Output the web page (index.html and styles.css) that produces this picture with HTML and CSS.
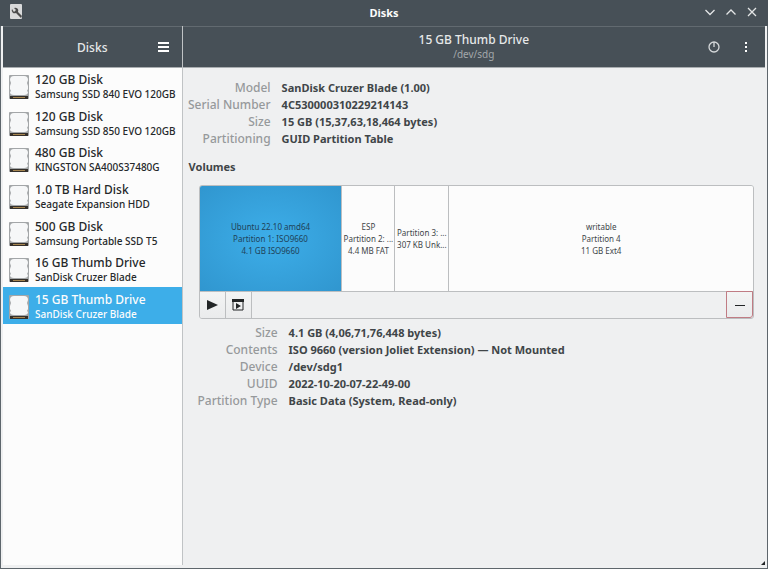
FILE: index.html
```html
<!DOCTYPE html>
<html lang="en">
<head>
  <meta charset="UTF-8">
  <meta name="viewport" content="width=device-width, initial-scale=1.0">
  <title>Disks</title>
  <link rel="stylesheet" href="styles.css">
</head>
<body>
  <svg class="symbols" width="0" height="0" aria-hidden="true">
    <defs>
      <symbol id="drive" viewBox="0 0 20 24">
        <rect x="0" y="0" width="20" height="24" rx="1" fill="#a3a6a8"/>
        <path d="M5 1h10q4 0 4 4l-1 3 1 3v3l-1 2 1 1q0 3-4 3H5q-4 0-4-3l1-1-1-2v-3l1-3-1-3q0-4 4-4z" fill="#f6f7f8"/>
        <rect x="1" y="21" width="18" height="3" fill="#35302b"/>
        <path d="M4 22.500h12" stroke="#a58550" stroke-width="1"/>
      </symbol>
    </defs>
  </svg>

  <div class="window">
    <div class="titlebar">
      <svg class="app-icon" width="14" height="16" viewBox="0 0 14 16">
        <rect x="0" y="0" width="12" height="15" rx="1" fill="#d9dadb"/>
        <path d="M2 5a3 3 0 0 0 4 4l5 5 1-2-4-4a3 3 0 0 0-4-4l2 2-2 2z" fill="#4c4c4c"/>
      </svg>
      <h1>Disks</h1>
      <div class="window-buttons">
        <button type="button" aria-label="Minimize">
          <svg width="12" height="12" viewBox="0 0 12 12"><path d="M1.500 4 6 8.500 10.500 4"/></svg>
        </button>
        <button type="button" aria-label="Maximize">
          <svg width="12" height="12" viewBox="0 0 12 12"><path d="M1.500 8.500 6 4l4.500 4.500"/></svg>
        </button>
        <button type="button" aria-label="Close">
          <svg width="12" height="12" viewBox="0 0 12 12"><path d="m2 2 8 8M10 2l-8 8"/></svg>
        </button>
      </div>
    </div>

    <div class="content">
      <aside class="sidebar">
        <header class="header side-header">
          <h2>Disks</h2>
          <button type="button" class="icon-button" aria-label="Menu">
            <svg width="12" height="12" viewBox="0 0 12 12"><path d="M1 2h11M1 6h11M1 10h11" stroke="#fff" stroke-width="2"/></svg>
          </button>
        </header>
        <ul class="drive-list">
          <li><a href="#" class="drive"><svg width="20" height="24"><use href="#drive"/></svg><span><b>120 GB Disk</b><small>Samsung SSD 840 EVO 120GB</small></span></a></li>
          <li><a href="#" class="drive"><svg width="20" height="24"><use href="#drive"/></svg><span><b>120 GB Disk</b><small>Samsung SSD 850 EVO 120GB</small></span></a></li>
          <li><a href="#" class="drive"><svg width="20" height="24"><use href="#drive"/></svg><span><b>480 GB Disk</b><small>KINGSTON SA400S37480G</small></span></a></li>
          <li><a href="#" class="drive"><svg width="20" height="24"><use href="#drive"/></svg><span><b>1.0 TB Hard Disk</b><small>Seagate Expansion HDD</small></span></a></li>
          <li><a href="#" class="drive"><svg width="20" height="24"><use href="#drive"/></svg><span><b>500 GB Disk</b><small>Samsung Portable SSD T5</small></span></a></li>
          <li><a href="#" class="drive"><svg width="20" height="24"><use href="#drive"/></svg><span><b>16 GB Thumb Drive</b><small>SanDisk Cruzer Blade</small></span></a></li>
          <li><a href="#" class="drive selected" aria-current="true"><svg width="20" height="24"><use href="#drive"/></svg><span><b>15 GB Thumb Drive</b><small>SanDisk Cruzer Blade</small></span></a></li>
        </ul>
      </aside>

      <main class="main">
        <header class="header main-header">
          <div class="heading">
            <h2>15 GB Thumb Drive</h2>
            <p>/dev/sdg</p>
          </div>
          <div class="header-actions">
            <button type="button" class="icon-button" aria-label="Power off">
              <svg width="12" height="12" viewBox="0 0 12 12"><circle cx="6" cy="6" r="5" fill="none" stroke="#d5d8da" stroke-width="1.300"/><path d="M6 1v5" stroke="#d5d8da" stroke-width="1.300"/></svg>
            </button>
            <button type="button" class="icon-button" aria-label="Drive options">
              <svg width="12" height="12" viewBox="0 0 12 12"><path d="M5 1h2v2H5zM5 5h2v2H5zM5 9h2v2H5z" fill="#fff"/></svg>
            </button>
          </div>
        </header>

        <div class="details">
          <dl class="info drive-info">
            <dt>Model</dt><dd>SanDisk Cruzer Blade (1.00)</dd>
            <dt>Serial Number</dt><dd>4C530000310229214143</dd>
            <dt>Size</dt><dd>15 GB (15,37,63,18,464 bytes)</dd>
            <dt>Partitioning</dt><dd>GUID Partition Table</dd>
          </dl>

          <h3>Volumes</h3>

          <section class="volumes">
            <div class="partitions">
              <button type="button" class="partition active">
                <span>Ubuntu 22.10 amd64</span>
                <span>Partition 1: ISO9660</span>
                <span>4.1 GB ISO9660</span>
              </button>
              <button type="button" class="partition">
                <span>ESP</span>
                <span>Partition 2: ...</span>
                <span>4.4 MB FAT</span>
              </button>
              <button type="button" class="partition">
                <span>Partition 3: ...</span>
                <span>307 KB Unk...</span>
              </button>
              <button type="button" class="partition">
                <span>writable</span>
                <span>Partition 4</span>
                <span>11 GB Ext4</span>
              </button>
            </div>
            <div class="toolbar">
              <button type="button" class="tool" aria-label="Mount">
                <svg width="12" height="12" viewBox="0 0 12 12"><path d="M1 1l11 5-11 5z" fill="#222526"/></svg>
              </button>
              <button type="button" class="tool" aria-label="Partition options">
                <svg width="12" height="12" viewBox="0 0 12 12"><path d="M1 1h10v10H1z" fill="none" stroke="#222526"/><path d="M0 0h12v3H0zM4 4l5 3-5 3z" fill="#222526"/></svg>
              </button>
              <button type="button" class="tool remove" aria-label="Delete partition">
                <svg width="12" height="12" viewBox="0 0 12 12"><path d="M1 6.500h10" stroke="#222526"/></svg>
              </button>
            </div>
          </section>

          <dl class="info volume-info">
            <dt>Size</dt><dd>4.1 GB (4,06,71,76,448 bytes)</dd>
            <dt>Contents</dt><dd>ISO 9660 (version Joliet Extension) — Not Mounted</dd>
            <dt>Device</dt><dd>/dev/sdg1</dd>
            <dt>UUID</dt><dd>2022-10-20-07-22-49-00</dd>
            <dt>Partition Type</dt><dd>Basic Data (System, Read-only)</dd>
          </dl>
        </div>
        <svg class="grip" width="4" height="4" viewBox="0 0 4 4"><path d="M4 0v4H0z" fill="#222526"/></svg>
      </main>
    </div>
  </div>
</body>
</html>
```
FILE: styles.css
```css
* {
  box-sizing: border-box;
}

body {
  margin: 0;
  font-family: "Noto Sans", sans-serif;
  font-size: 11px;
  font-weight: 700;
  line-height: 17px;
  color: #404548;
}

h1, h2, h3, p, ul, dl, dd {
  margin: 0;
  padding: 0;
}

h1, h2, h3 {
  font-size: 11px;
  font-weight: 700;
}

button {
  font: inherit;
  color: inherit;
  padding: 0;
  border: 0;
  background: none;
}

svg {
  display: block;
  flex: none;
}

.symbols {
  position: absolute;
}

.window {
  display: flex;
  flex-direction: column;
  min-height: 100vh;
  background: #eff0f1;
  border: 1px solid #5e666c;
  border-top: 0;
}

/* title bar */
.titlebar {
  display: grid;
  grid-template-columns: 1fr auto 1fr;
  align-items: center;
  height: 26px;
  margin: 0 -1px;
  padding: 0 10px 2px;
  background: #475057;
  color: #fcfcfc;
}

.window-buttons {
  display: flex;
  justify-content: flex-end;
  gap: 9px;
}

.window-buttons path {
  fill: none;
  stroke: #e3e5e6;
  stroke-width: 1.3;
}

.content {
  display: flex;
  flex: 1;
  padding: 0 2px 3px;
}

.header {
  display: flex;
  align-items: center;
  height: 42px;
  background: #475057;
  border-top: 1px solid #626a70;
  border-bottom: 1px solid #a9adb0;
  color: #e6e8e9;
}

.header h2 {
  font-size: 12px;
  font-weight: 500;
}

.icon-button {
  display: grid;
  place-items: center;
  width: 24px;
  height: 24px;
}

/* sidebar */
.sidebar {
  flex: 0 0 179px;
  background: #fcfcfc;
  border-right: 1px solid #c0c3c5;
}

.side-header {
  position: relative;
  justify-content: center;
}

.side-header .icon-button {
  position: absolute;
  right: 7px;
}

.drive-list {
  display: grid;
  grid-auto-rows: 1fr;
  height: 256px;
  list-style: none;
}

.drive {
  display: flex;
  align-items: center;
  gap: 6px;
  height: 100%;
  padding: 2px 6px 0;
  color: #25282a;
  text-decoration: none;
  white-space: nowrap;
}

.drive b,
.drive small {
  display: block;
  font-weight: 500;
  line-height: 15px;
}

.drive b {
  font-size: 12px;
}

.drive small {
  font-size: 10px;
}

.drive.selected {
  background: #3daee9;
  color: #fcfcfc;
}

/* drive page */
.main {
  position: relative;
  flex: 1;
  min-width: 0;
}

.main-header {
  display: grid;
  grid-template-columns: 1fr auto 1fr;
  padding: 0 7px;
}

.heading {
  grid-column: 2;
  text-align: center;
}

.heading h2,
.heading p {
  line-height: 15px;
}

.heading p {
  font-size: 10px;
  font-weight: 400;
  color: #a3a8ab;
}

.header-actions {
  display: flex;
  justify-content: flex-end;
  gap: 8px;
}

.details {
  padding: 11px 11px 12px 6px;
}

.info {
  display: grid;
  justify-content: start;
  column-gap: 11px;
}

.info dt {
  font-size: 12px;
  font-weight: 500;
  text-align: right;
  color: #96999b;
  white-space: nowrap;
}

.drive-info {
  grid-template-columns: 82px auto;
}

.drive-info dt {
  justify-self: end;
}

.volume-info {
  grid-template-columns: 89px auto;
}

.details h3 {
  margin: 11px 0 10px;
}

.volumes {
  margin: 0 0 5px 10px;
  border: 1px solid #bcbec0;
  border-radius: 3px;
  overflow: hidden;
}

.partitions {
  display: grid;
  grid-template-columns: 142fr 53fr 54fr 305fr;
  height: 106px;
  border-bottom: 1px solid #bcbec0;
}

.partition {
  display: flex;
  flex-direction: column;
  align-items: center;
  justify-content: center;
  min-width: 0;
  overflow: hidden;
  background: #fcfcfc;
  font-size: 8px;
  font-weight: 400;
  line-height: 12px;
  white-space: nowrap;
}

.partition + .partition {
  border-left: 1px solid #bcbec0;
}

.partition.active {
  background: radial-gradient(#3daee9, #3096cf);
  color: #1f4258;
}

.toolbar {
  display: flex;
  height: 26px;
}

.tool {
  display: grid;
  place-items: center;
  width: 26px;
  background: linear-gradient(#f3f4f4, #eaebec);
  border-right: 1px solid #bcbec0;
}

.tool.remove {
  width: 27px;
  margin: -1px 0 0 auto;
  border: 1px solid #c07c84;
  border-radius: 0 0 3px 0;
}

.grip {
  position: absolute;
  right: 0;
  bottom: 0;
}
```
